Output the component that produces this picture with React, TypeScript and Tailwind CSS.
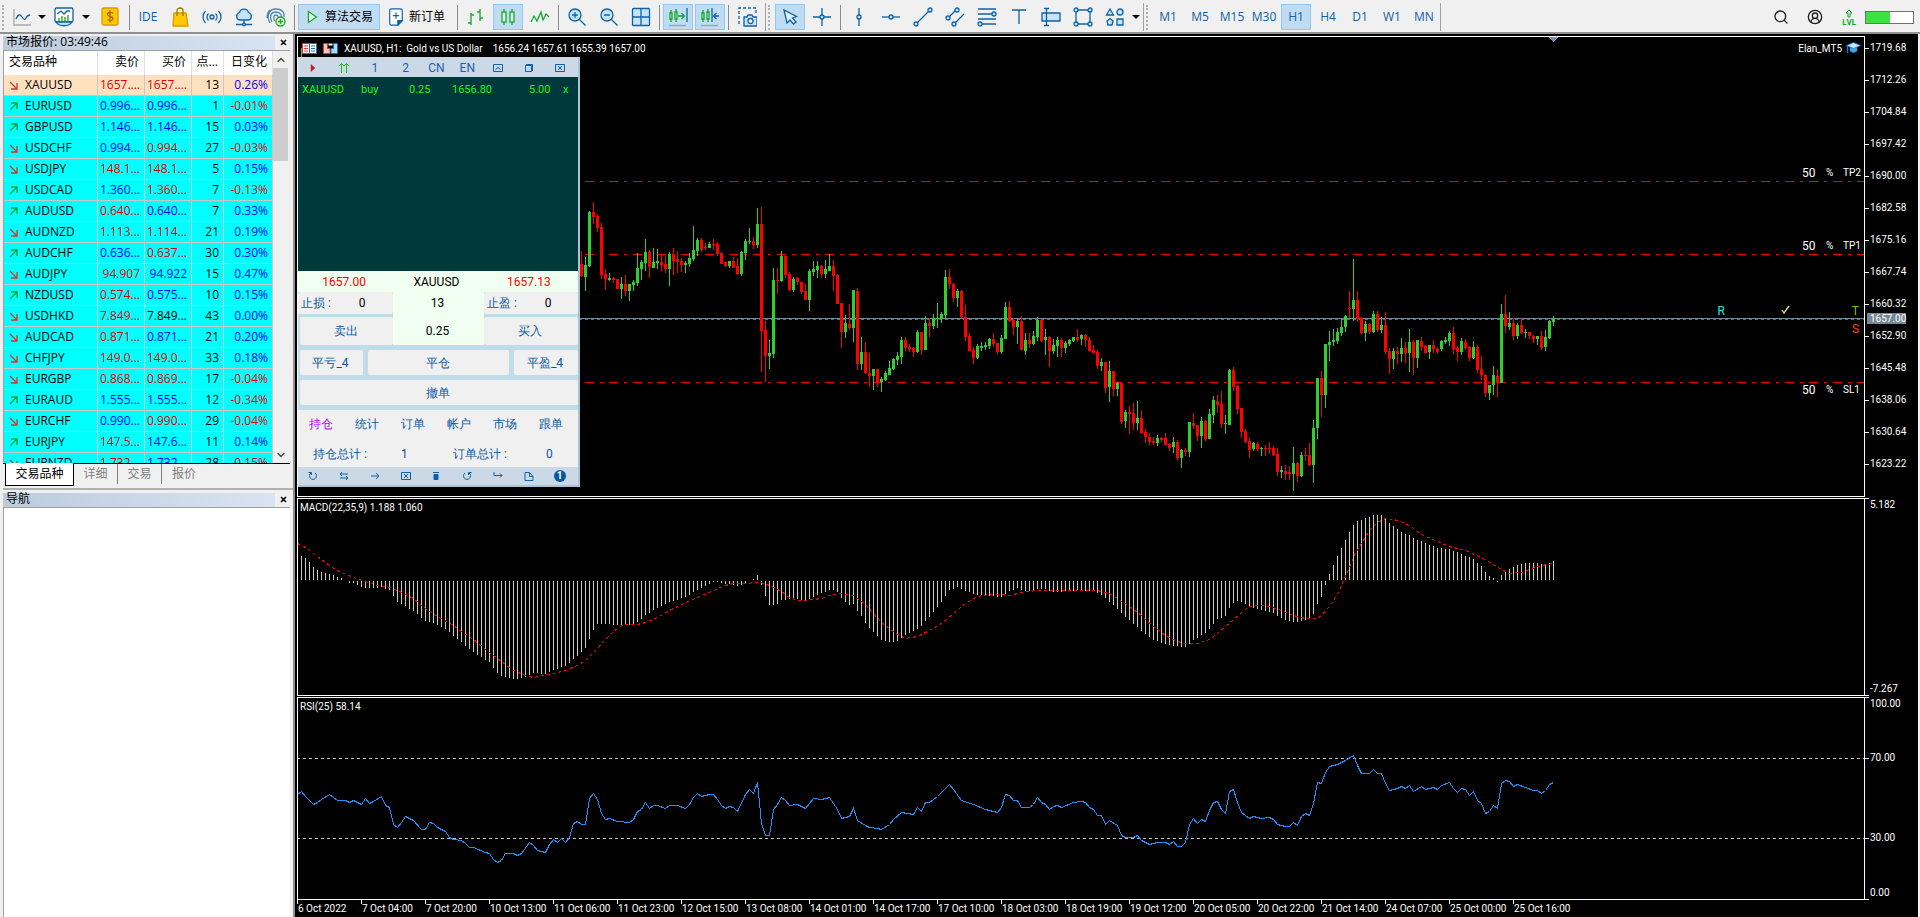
import * as React from "react"
import { ChevronDown, ChevronUp, CircleUserRound, Search } from "lucide-react"
import clsx from "clsx"

const UI_FONT = "font-['Open_Sans','Noto_Sans_CJK_SC',sans-serif]"
const CHART_FONT = "font-[Roboto,sans-serif]"

/* ------------------------------------------------------------------ */
/* Market data                                                         */
/* ------------------------------------------------------------------ */

type Tone = "up" | "down" | "flat"

interface Quote {
  symbol: string
  trend: "up" | "down"
  bid: string
  bidTone: Tone
  ask: string
  askTone: Tone
  spread: number
  change: string
}

function quote(
  symbol: string,
  trend: "up" | "down",
  bid: string,
  bidTone: Tone,
  ask: string,
  askTone: Tone,
  spread: number,
  change: string
): Quote {
  return { symbol, trend, bid, bidTone, ask, askTone, spread, change }
}

const QUOTES: Quote[] = [
  quote("XAUUSD", "down", "1657....", "down", "1657....", "down", 13, "0.26%"),
  quote("EURUSD", "up", "0.996...", "up", "0.996...", "up", 1, "-0.01%"),
  quote("GBPUSD", "up", "1.146...", "up", "1.146...", "up", 15, "0.03%"),
  quote("USDCHF", "down", "0.994...", "up", "0.994...", "down", 27, "-0.03%"),
  quote("USDJPY", "down", "148.1...", "down", "148.1...", "down", 5, "0.15%"),
  quote("USDCAD", "up", "1.360...", "up", "1.360...", "down", 7, "-0.13%"),
  quote("AUDUSD", "up", "0.640...", "down", "0.640...", "up", 7, "0.33%"),
  quote("AUDNZD", "down", "1.113...", "down", "1.114...", "down", 21, "0.19%"),
  quote("AUDCHF", "up", "0.636...", "up", "0.637...", "down", 30, "0.30%"),
  quote("AUDJPY", "down", "94.907", "down", "94.922", "up", 15, "0.47%"),
  quote("NZDUSD", "up", "0.574...", "down", "0.575...", "up", 10, "0.15%"),
  quote("USDHKD", "down", "7.849...", "down", "7.849...", "flat", 43, "0.00%"),
  quote("AUDCAD", "down", "0.871...", "down", "0.871...", "up", 21, "0.20%"),
  quote("CHFJPY", "down", "149.0...", "down", "149.0...", "down", 33, "0.18%"),
  quote("EURGBP", "down", "0.868...", "down", "0.869...", "down", 17, "-0.04%"),
  quote("EURAUD", "up", "1.555...", "up", "1.555...", "up", 12, "-0.34%"),
  quote("EURCHF", "down", "0.990...", "up", "0.990...", "down", 29, "-0.04%"),
  quote("EURJPY", "up", "147.5...", "down", "147.6...", "up", 11, "0.14%"),
  quote("EURNZD", "down", "1.732...", "down", "1.732...", "up", 28, "-0.15%"),
]

const TONE_CLASS: Record<Tone, string> = {
  up: "text-[#0000ff]",
  down: "text-[#e00000]",
  flat: "text-black",
}

/** direction, high, body top, body bottom, low */
const CANDLES = `
r91,104,116,117 g97,105,117,131 g51,52,106,107 r42,52,57,64 r54,56,68,72 r63,67,115,119 r109,114,119,130 g113,118,120,121
r117,118,120,123 r119,119,129,129 g117,124,129,139 r115,124,131,136 g124,124,131,141 g120,122,125,131 g93,108,123,126 g100,102,109,120
g79,92,103,111 r90,92,107,118 g88,102,108,108 g89,101,103,109 r95,102,105,111 r96,104,109,113 g92,94,109,126 r88,94,101,115
r91,99,102,113 r98,101,105,112 g101,103,105,113 g93,98,104,107 g66,90,99,101 g78,80,91,96 r78,80,90,92 r83,87,88,90
g82,84,88,88 r79,84,85,90 r82,84,94,96 r92,93,104,104 r102,102,106,107 g101,101,106,108 r97,101,108,108 r98,106,114,115
g91,92,114,116 g79,81,93,100 g68,81,82,84 r77,81,85,89 g48,64,85,88 r47,64,171,212 r161,170,196,222 g180,193,196,209
g108,120,194,198 r108,120,121,134 g91,96,121,122 r96,96,115,118 r112,114,130,131 g117,119,130,132 r117,118,122,125 r122,122,132,134
r124,131,140,140 g109,111,140,151 g101,109,112,116 g101,106,110,118 r105,106,114,118 g100,109,114,118 g94,106,111,111 r100,106,116,131
r114,115,144,144 r143,143,172,188 g155,163,172,178 r144,164,168,170 g130,130,168,182 r128,131,204,210 g177,192,204,210 r182,192,213,214
r193,213,216,227 g209,209,216,230 r209,209,222,227 g217,219,222,232 g211,213,220,221 g201,208,215,215 g198,199,209,210 g192,196,200,205
g177,180,197,204 r177,180,188,191 r184,187,189,192 r187,188,192,197 g170,172,192,193 r172,172,190,195 g156,163,190,190 r158,163,166,177
g154,158,166,169 g143,158,159,168 g152,154,159,163 g110,117,155,158 r109,117,124,129 r123,124,138,142 g129,131,138,147 r130,131,157,158
r145,157,177,181 r173,176,191,191 r187,190,198,204 g184,186,198,199 g182,186,188,191 g182,185,187,190 g178,179,186,189 r173,179,184,187
r183,183,192,194 g175,178,192,194 g142,147,179,179 r141,147,161,162 r158,160,167,175 g159,161,167,184 r156,161,190,190 g173,180,191,195
r173,180,184,188 g171,176,184,185 g157,160,177,181 r159,160,181,182 g169,177,180,195 r176,177,191,207 g179,185,191,194 g177,180,186,197
r178,180,188,197 g181,183,188,193 g179,180,184,186 g177,177,181,182 r169,177,180,182 g174,175,179,185 r174,175,180,187 r177,180,191,191
r185,190,193,193 r190,192,206,209 g198,202,206,211 r202,202,228,233 g201,211,227,242 r211,211,229,236 g222,223,229,236 r223,223,262,264
g250,252,261,268 r246,252,254,274 r243,253,263,270 g241,258,263,270 r250,258,273,274 r269,272,277,283 r273,277,282,285 r277,281,283,285
g275,278,283,286 r277,278,280,282 r273,278,285,285 r283,284,288,291 g277,282,287,293 r280,282,298,301 g289,290,298,308 r288,290,292,296
g262,262,292,297 r253,263,266,269 r265,265,276,281 g257,261,276,288 r260,261,279,281 g249,254,279,279 g236,240,255,263 r235,241,245,253
r231,244,264,268 g255,263,264,274 g209,210,265,265 r207,210,227,231 r225,226,249,254 r248,248,272,278 r269,271,282,283 r278,281,290,298
g282,283,289,291 r282,284,289,291 g287,288,289,296 r285,288,289,296 r282,288,289,294 r286,288,295,296 r288,294,312,316 g306,310,312,318
r305,311,314,320 r306,312,314,320 g287,303,314,331 r302,303,316,322 g292,295,316,317 r288,295,296,301 r283,295,305,306 g260,268,305,323
g218,218,268,279 r211,218,235,257 g184,184,235,248 g171,182,185,201 g169,180,182,186 g168,172,181,184 g159,167,173,176 g155,156,167,172
r131,148,149,158 g99,140,149,161 r131,140,159,162 r157,158,173,174 g161,164,173,181 r163,164,172,174 g151,154,172,173 r151,154,170,172
g157,165,170,173 r152,165,192,194 r188,191,199,214 g188,191,199,209 r187,191,194,204 g178,188,194,202 r182,188,193,203 g169,182,193,212
r180,182,198,215 g180,180,198,208 r177,181,187,191 r185,186,193,193 g185,185,192,199 r180,185,189,193 r187,189,192,194 g180,181,189,191
g177,180,182,184 g171,173,181,186 r167,173,189,194 r186,188,192,201 g178,181,192,195 r179,182,188,190 r186,187,198,201 g181,187,198,199
r185,187,210,213 r196,209,215,220 r214,215,233,237 g225,225,233,240 g206,215,225,235 r209,216,223,237 g144,154,223,223 r135,154,166,173
g152,163,167,170 r158,163,176,180 g163,165,176,179 r158,165,173,174 g169,172,173,178 r172,172,176,179 r175,176,179,183 g176,176,179,185
r171,176,188,190 g170,177,187,191 g160,161,178,179 g156,158,162,166`
  .trim()
  .split(/\s+/)
  .map((c) => ({ up: c[0] === "g", v: c.slice(1).split(",").map(Number) }))

type Point = [number, number]

/** "bar:value" pairs */
function parseSeries(src: string): Point[] {
  return src
    .trim()
    .split(/\s+/)
    .map((p) => p.split(":").map(Number) as Point)
}

const MACD_KEYS = parseSeries(`
0:66 1:68 2:72 3:77 4:80 5:82 7:84 8:85 9:87 10:88 11:90 12:93 13:93 14:95 15:97 17:98 19:98 20:97 22:100 23:106 24:112 26:116 28:121
31:131 33:133 36:139 39:149 42:159 44:165 47:172 48:178 49:183 50:186 52:188 54:189 56:187 58:183 61:184 63:180 66:176 68:169 70:162
71:158 72:149 73:140 74:134 81:135 83:134 84:132 86:125 89:118 92:112 96:107 99:100 102:94 103:92 104:92 108:95 109:96 110:95 111:93
112:91 113:89 114:85 115:95 116:106 117:115 119:114 120:110 122:109 124:109 126:110 127:109 129:105 132:100 133:100 134:102 135:108
137:115 138:114 139:121 140:126 141:133 142:138 143:142 145:150 147:152 149:151 151:145 153:141 155:136 156:131 157:127 160:112 162:100
164:97 168:104 172:106 175:107 177:101 179:98 181:101 183:101 184:99 186:99 188:102 193:101 194:100 198:101 200:105 203:115 205:123
207:130 210:141 213:150 217:155 220:157 221:157 223:150 225:145 226:143 227:139 229:129 231:126 232:118 233:113 234:111 235:112 236:114
237:116 239:119 243:123 245:128 247:131 249:132 250:131 252:129 253:124 254:114 255:107 256:95 257:84 258:75 259:66 260:58 261:50 262:42
263:35 264:31 266:28 268:25 270:25 271:29 272:33 274:39 276:44 277:45 278:48 281:53 284:58 287:59 290:64 293:69 294:73 295:76 296:82
297:86 298:88 299:92 300:85 301:82 302:79 304:75 306:73 309:73 310:74 311:75 312:73 313:71`)

const SIGNAL_KEYS = parseSeries(`
-1:53 1:57 2:60 4:66 6:72 8:78 10:82 13:87 16:91 19:95 22:97 24:100 26:104 28:108 31:118 34:126 38:135 40:141 43:149 47:162 50:171 53:180
56:185 58:187 62:184 66:180 69:175 71:170 72:166 73:162 74:158 76:149 78:141 80:135 82:134 84:134 86:132 89:127 92:120 95:114 99:107
103:100 106:95 108:93 111:93 114:92 116:93 118:97 120:101 122:107 124:110 126:110 130:108 132:105 135:103 138:105 139:108 141:114 143:123
145:132 147:138 149:144 151:148 154:146 157:140 160:133 163:123 166:113 169:106 172:104 175:104 177:105 180:102 184:100 193:100 199:100
202:103 204:108 207:116 210:125 213:136 216:145 219:151 221:153 224:153 227:149 229:143 231:136 233:129 235:122 237:116 239:115 242:116
245:120 248:125 251:128 254:128 255:125 257:116 259:104 260:95 261:86 262:77 263:66 265:53 267:40 269:32 271:28 273:29 275:31 278:38
280:44 284:51 287:56 291:60 295:67 298:74 300:79 302:83 305:82 307:79 310:75 313:73`)

const RSI_KEYS = parseSeries(`
-1:304 0:301 1:306 2:310 3:314 4:312 5:309 7:304 9:310 11:310 12:312 13:310 15:314 16:308 17:313 18:311 20:306 21:315 22:317 23:334 24:337
25:332 26:326 28:330 30:339 31:339 32:332 33:333 34:337 36:341 37:347 38:349 40:350 41:353 42:357 43:357 46:362 47:363 48:369 49:372
50:370 51:363 53:363 54:365 55:363 57:352 58:355 59:360 61:362 62:354 63:349 64:352 65:348 66:352 67:347 68:333 69:331 70:334 71:334
72:308 73:303 74:309 75:323 76:329 77:328 79:331 82:332 83:329 84:321 85:319 86:312 87:318 88:315 89:315 91:318 92:315 94:315 96:318
97:314 98:307 99:303 100:306 102:304 103:304 104:309 105:315 106:318 107:316 108:317 109:321 111:304 112:299 113:303 114:292 115:333
116:345 117:345 118:319 119:314 120:307 121:310 122:315 124:314 126:318 128:308 130:309 132:307 133:313 134:319 135:328 137:326 138:318
139:330 141:335 142:337 144:338 145:339 147:334 148:329 150:322 153:324 154:317 155:321 156:312 157:312 159:306 162:294 163:299 165:310
168:314 171:319 174:322 175:317 176:304 177:305 178:310 179:310 180:317 182:317 183:314 184:307 185:312 186:314 187:319 188:316 189:315
190:317 193:312 195:311 196:312 197:317 198:319 199:325 200:325 201:334 202:330 204:335 205:345 206:347 208:347 209:345 210:350 212:354
214:352 216:352 217:354 218:351 219:356 220:356 221:352 222:334 223:328 224:333 225:329 226:331 227:320 228:312 229:311 230:319 231:323
232:301 233:299 234:312 235:322 237:328 238:326 240:328 242:327 243:329 244:334 246:336 247:336 248:332 249:335 250:326 251:323 252:325
253:313 254:292 255:293 256:282 257:276 259:274 261:270 263:265 264:275 265:283 267:283 268:279 269:283 270:283 271:293 272:300 274:298
275:296 276:298 277:295 278:301 280:296 281:299 283:297 284:299 285:295 287:292 288:298 289:302 290:298 291:299 292:305 293:301 294:310
295:313 296:323 297:321 298:315 299:318 300:293 301:290 302:291 303:296 304:294 306:297 308:300 309:300 310:303 311:300 312:294 313:292`)

const BAR_STEP = 4
const BAR_ORIGIN = 3
const FIRST_CANDLE = 70

const barX = (index: number) => BAR_ORIGIN + index * BAR_STEP

/** Linear interpolation between key points, one value for each bar */
function fillSeries(keys: Point[], count: number) {
  const out: number[] = []
  let k = 0
  for (let i = 0; i < count; i++) {
    while (k < keys.length - 2 && keys[k + 1][0] <= i) k++
    const [x0, y0] = keys[k]
    const [x1, y1] = keys[k + 1]
    out.push(Math.round(y0 + ((y1 - y0) * (i - x0)) / (x1 - x0)))
  }
  return out
}

const MACD_BARS = fillSeries(MACD_KEYS, 314)

const toPolyline = (keys: Point[], offset: number) =>
  keys.map(([i, v]) => `${barX(i) + 0.5},${v - offset + 0.5}`).join(" ")

const PRICE_LABELS = [
  "1719.68", "1712.26", "1704.84", "1697.42", "1690.00", "1682.58", "1675.16",
  "1667.74", "1660.32", "1652.90", "1645.48", "1638.06", "1630.64", "1623.22",
]

const DATE_LABELS = [
  "6 Oct 2022", "7 Oct 04:00", "7 Oct 20:00", "10 Oct 13:00", "11 Oct 06:00", "11 Oct 23:00", "12 Oct 15:00",
  "13 Oct 08:00", "14 Oct 01:00", "14 Oct 17:00", "17 Oct 10:00", "18 Oct 03:00", "18 Oct 19:00", "19 Oct 12:00",
  "20 Oct 05:00", "20 Oct 22:00", "21 Oct 14:00", "24 Oct 07:00", "25 Oct 00:00", "25 Oct 16:00",
]

/* ------------------------------------------------------------------ */
/* Toolbar                                                             */
/* ------------------------------------------------------------------ */

const BLUE = "#0f62a8"
const PALE = "#c5e4fa"
const GREEN = "#12a82c"

function Icon({ children, size = 20, stroke = BLUE }: { children: React.ReactNode; size?: number; stroke?: string }) {
  return (
    <svg width={size} height={size} viewBox="0 0 20 20" fill="none" stroke={stroke} strokeWidth="1.3" aria-hidden>
      {children}
    </svg>
  )
}

function Caret({ label, className }: { label: string; className: string }) {
  return (
    <button type="button" aria-label={label} className={clsx("flex h-[26px] items-center justify-center", className)}>
      <span className="border-x-[4px] border-t-4 border-x-transparent border-t-black" />
    </button>
  )
}

function ToolButton({ label, active, children }: { label: string; active?: boolean; children: React.ReactNode }) {
  return (
    <button
      type="button"
      aria-label={label}
      className={clsx(
        "mx-px flex h-[26px] w-[30px] shrink-0 items-center justify-center text-xs text-[#0f62a8]",
        active && "border border-[#90c8f6] bg-[#c0dcf3]"
      )}
    >
      {children}
    </button>
  )
}

const Separator = () => (
  <span className="flex w-[5px] shrink-0 justify-center">
    <span className="h-[25px] w-px bg-[#8a8a8a]" />
  </span>
)

const Grip = () => <span className="h-[25px] w-0 border-l-2 border-dotted border-[#b0b0b0]" />

const GroupEnd = () => (
  <span className="flex h-7 w-[11px] shrink-0 items-center gap-0.5 pl-0.5">
    <span className="h-full w-px bg-[#a0a0a0]" />
    <Grip />
  </span>
)

const TIMEFRAMES = ["M1", "M5", "M15", "M30", "H1", "H4", "D1", "W1", "MN"]

function Toolbar() {
  return (
    <header className="flex h-[34px] items-center border-b-2 border-[#909090] bg-[#f0f0f0] pt-0.5">
      <span className="flex w-2 shrink-0 pl-0.5">
        <Grip />
      </span>
      <button type="button" aria-label="Line chart" className="flex w-7 shrink-0 justify-center">
        <Icon>
          <path d="M2 2v16h17" stroke="#a8a8a8" />
          <path d="M4 12c2-5 4-5 6-2s3 3 4 1 2-3 4-3" />
        </Icon>
      </button>
      <Caret label="Chart list" className="w-3" />
      <button type="button" aria-label="Indicators" className="flex w-8 shrink-0 justify-center">
        <Icon>
          <rect x="1" y="1" width="18" height="14" rx="1.5" fill="#fff" />
          <path d="M3 7l4-3 3 3 3-3h3" />
          <path d="M5 14v-3M8 14v-5M11 14v-4M14 14v-6" stroke={GREEN} />
          <path d="M2 15c3 5 13 5 16 0z" fill={PALE} />
        </Icon>
      </button>
      <Caret label="Indicator list" className="w-3" />
      <button type="button" aria-label="Trade" className="flex w-[35px] shrink-0 justify-center">
        <Icon stroke="#a86a00">
          <rect x="2" y="1" width="16" height="17" rx="1.5" fill="#ffc800" stroke="#d89c00" />
          <path d="M13 6.5c-1-1.5-5.500-1.500-5.500 1s5.500 1.500 5.500 4-4.500 2.500-5.500 1M10 3.500v12" />
        </Icon>
      </button>
      <Separator />
      <ToolButton label="IDE">IDE</ToolButton>
      <ToolButton label="Market">
        <Icon stroke="#d89c00">
          <path d="M4 6h12l2 13H3z" fill="#ffc800" />
          <path d="M7 9V4c0-4 6-4 6 0v5" stroke="#a87400" />
        </Icon>
      </ToolButton>
      <ToolButton label="Signals">
        <Icon>
          <circle cx="10" cy="10" r="2" fill={PALE} />
          <path d="M6.500 6.500c-2 2-2 5 0 7M13.500 6.500c2 2 2 5 0 7M3.500 4c-3.300 3.500-3.300 8.500 0 12M16.500 4c3.300 3.500 3.300 8.500 0 12" />
        </Icon>
      </ToolButton>
      <ToolButton label="VPS">
        <Icon>
          <path d="M5 13a4 4 0 0 1 .5-7.500c1-4.500 8-4.500 9 0A4 4 0 0 1 15 13z" fill={PALE} />
          <path d="M10 13v4M2 17.500h16" />
          <circle cx="10" cy="17.500" r="1.300" fill={PALE} />
        </Icon>
      </ToolButton>
      <ToolButton label="Accounts">
        <Icon>
          <path d="M4 16C0 9 3 2 10 2s9 5 8 8M6 15C3 9 5 5 10 5s6 4 5.500 6M8.500 14C7 10 8 8 10 8s3 2 2 5M1 11c0-3 1-6 3-8" stroke="#4a86b8" />
          <circle cx="14.500" cy="14.500" r="4.500" fill="#d8f5d8" stroke={GREEN} />
          <path d="M14.500 12v5M12 14.500h5" stroke={GREEN} />
        </Icon>
      </ToolButton>
      <Separator />
      <button
        type="button"
        className="mx-px flex h-[26px] w-[82px] shrink-0 items-center justify-center gap-1 border border-[#90c8f6] bg-[#c0dcf3] pr-0.5 text-xs text-black"
      >
        <Icon size={18} stroke={GREEN}>
          <path d="M6 4l9 6-9 6z" fill="#e2f6e2" />
        </Icon>
        算法交易
      </button>
      <button type="button" className="flex h-[26px] w-[74px] shrink-0 items-center justify-center gap-1 pr-1 text-xs text-black">
        <Icon size={18}>
          <path d="M3 3q0-2 2-2h10q2 0 2 2v11l-5 5H5q-2 0-2-2z" fill="#fff" />
          <path d="M12 19l5-5h-5z" fill={BLUE} />
          <path d="M10 5v7M6.500 8.500h7" />
        </Icon>
        新订单
      </button>
      <Separator />
      <ToolButton label="Bar chart">
        <Icon stroke={GREEN}>
          <path d="M5 6v12M2 16h3M5 8h3M14 2v12M11 5h3M14 11h3" />
        </Icon>
      </ToolButton>
      <ToolButton label="Candlesticks" active>
        <Icon stroke={GREEN}>
          <path d="M6 2v16M14 2v16" />
          <rect x="4" y="5" width="4" height="10" fill="#e2f6e2" />
          <rect x="12" y="5" width="4" height="10" fill="#e2f6e2" />
        </Icon>
      </ToolButton>
      <ToolButton label="Line">
        <Icon stroke={GREEN}>
          <path d="M1 15l3-6 3 5 4-9 2 8 3-6 3 3" />
        </Icon>
      </ToolButton>
      <Separator />
      <ToolButton label="Zoom in">
        <Icon>
          <circle cx="8" cy="8" r="6" fill={PALE} />
          <path d="M12.500 12.500l6 6M8 5v6M5 8h6" />
        </Icon>
      </ToolButton>
      <ToolButton label="Zoom out">
        <Icon>
          <circle cx="8" cy="8" r="6" fill={PALE} />
          <path d="M12.500 12.500l6 6M5 8h6" />
        </Icon>
      </ToolButton>
      <ToolButton label="Tile windows">
        <Icon>
          <rect x="1.500" y="1.500" width="17" height="17" rx="1" fill={PALE} />
          <path d="M10 1.500v17M1.500 10h17" />
        </Icon>
      </ToolButton>
      <Separator />
      <ToolButton label="Auto scroll" active>
        <Icon>
          <path d="M3 3v12M8 2v13M10 9h6M13.500 6l3 3-3 3" stroke={GREEN} />
          <path d="M2 6h2v6H2zM7 5h2v7H7z" fill="#e2f6e2" stroke={GREEN} />
          <path d="M19 1v14" />
          <path d="M1 18.500h17" stroke="#a0a0a0" />
        </Icon>
      </ToolButton>
      <ToolButton label="Chart shift" active>
        <Icon>
          <path d="M3 3v12M8 2v13" stroke={GREEN} />
          <path d="M2 6h2v6H2zM7 5h2v7H7z" fill="#e2f6e2" stroke={GREEN} />
          <path d="M12 1v14M14 9h5M16.500 6l-3 3 3 3" />
          <path d="M1 18.500h17" stroke="#a0a0a0" />
        </Icon>
      </ToolButton>
      <Separator />
      <ToolButton label="Screenshot">
        <Icon>
          <path d="M2 17V1h17v6" strokeDasharray="3 2" />
          <path d="M7 10h3l1-2h4l1 2h4v9H7z" fill={PALE} />
          <circle cx="13.500" cy="14" r="2.500" fill="#fff" />
        </Icon>
      </ToolButton>
      <GroupEnd />
      <ToolButton label="Cursor" active>
        <Icon>
          <path d="M4 3l3 13 3-3 3.500 4 2.500-2-3.500-4 4-1.500z" fill="#e4f2fc" />
        </Icon>
      </ToolButton>
      <ToolButton label="Crosshair">
        <Icon>
          <path d="M10 1v18M1 10h18" />
          <circle cx="10" cy="10" r="2" fill={PALE} />
        </Icon>
      </ToolButton>
      <Separator />
      <ToolButton label="Vertical line">
        <Icon>
          <path d="M10 1v18" />
          <circle cx="10" cy="10" r="2" fill={PALE} />
        </Icon>
      </ToolButton>
      <ToolButton label="Horizontal line">
        <Icon>
          <path d="M1 10h18" />
          <circle cx="10" cy="10" r="2" fill={PALE} />
        </Icon>
      </ToolButton>
      <ToolButton label="Trend line">
        <Icon>
          <path d="M3 17L17 3" />
          <circle cx="3" cy="17" r="2" fill={PALE} />
          <circle cx="17" cy="3" r="2" fill={PALE} />
        </Icon>
      </ToolButton>
      <ToolButton label="Channel">
        <Icon>
          <path d="M3 11l8-8M9 17l10-10" />
          <circle cx="3" cy="11" r="2" fill={PALE} />
          <circle cx="12" cy="3" r="2" fill={PALE} />
          <circle cx="9" cy="17" r="2" fill={PALE} />
        </Icon>
      </ToolButton>
      <ToolButton label="Fibonacci">
        <Icon>
          <path d="M1 2h18M1 7h15M1 12h18M4 17h15" />
          <circle cx="17" cy="7" r="2" fill={PALE} />
          <circle cx="3" cy="17" r="2" fill={PALE} />
        </Icon>
      </ToolButton>
      <ToolButton label="Text">
        <Icon>
          <path d="M3 3h14M10 3v14" />
        </Icon>
      </ToolButton>
      <ToolButton label="Text label">
        <Icon>
          <path d="M1 6h18v8H1z" fill={PALE} />
          <path d="M3 1.500h5M3 18.500h5M5.500 1.500v17" />
        </Icon>
      </ToolButton>
      <ToolButton label="Rectangle">
        <Icon>
          <path d="M3 3h14v14H3z" />
          <circle cx="3" cy="3" r="2" fill={PALE} />
          <circle cx="17" cy="3" r="2" fill={PALE} />
          <circle cx="3" cy="17" r="2" fill={PALE} />
          <circle cx="17" cy="17" r="2" fill={PALE} />
        </Icon>
      </ToolButton>
      <ToolButton label="Shapes">
        <Icon>
          <path d="M5 2l3.500 6h-7zM5 11.500l3 2.500-1 4H3l-1-4z" fill={PALE} />
          <circle cx="15" cy="5" r="3" fill={PALE} />
          <path d="M12 12h6v6h-6z" fill={PALE} />
        </Icon>
      </ToolButton>
      <Caret label="Shape list" className="w-[10px]" />
      <GroupEnd />
      {TIMEFRAMES.map((tf) => (
        <ToolButton key={tf} label={tf} active={tf === "H1"}>
          {tf}
        </ToolButton>
      ))}
      <span className="h-7 w-px shrink-0 bg-[#a0a0a0]" />
      <div className="ml-auto flex items-center pr-1.5">
        <button type="button" aria-label="Search" className="flex w-8 justify-center text-[#202020]">
          <Search size={16} strokeWidth={2} />
        </button>
        <button type="button" aria-label="Account" className="flex w-9 justify-center text-[#202020]">
          <CircleUserRound size={16} strokeWidth={2} />
        </button>
        <span className="flex w-8 flex-col items-center text-[8px] leading-[8px] font-bold text-[#12a82c]">
          <svg width="8" height="9" viewBox="0 0 8 9" fill="none" stroke={GREEN} aria-hidden>
            <path d="M4 1L1 4h2v4h2V4h2z" />
          </svg>
          LVL
        </span>
        <span className="flex h-[13px] w-[49px] border border-[#707070] bg-white">
          <span className="w-1/2 bg-[#3fe03f]" />
        </span>
      </div>
    </header>
  )
}

/* ------------------------------------------------------------------ */
/* Left dock                                                           */
/* ------------------------------------------------------------------ */

function DockTitle({ children }: { children: React.ReactNode }) {
  return (
    <div className="flex h-[15px] items-center text-xs leading-[15px] text-black">
      <h2 className="h-[14px] flex-1 bg-linear-to-r from-[#bccbdb] to-[#d8e4f2] pl-[3px] leading-[12px]">{children}</h2>
      <button type="button" aria-label="Close" className="flex w-[18px] justify-center pr-0.5">
        <svg width="7" height="7" viewBox="0 0 7 7" stroke="#000" strokeWidth="1.6" aria-hidden>
          <path d="M1 1l5 5M6 1L1 6" />
        </svg>
      </button>
    </div>
  )
}

function TrendArrow({ trend }: { trend: "up" | "down" }) {
  return (
    <svg
      width="9"
      height="9"
      viewBox="0 0 9 9"
      fill="none"
      stroke={trend === "up" ? "#10a030" : "#e03020"}
      strokeWidth="1.3"
      aria-hidden
    >
      <path d={trend === "up" ? "M1 8L8 1M2 1h6v6" : "M1 1l7 7M2 8h6V2"} />
    </svg>
  )
}

function MarketWatch() {
  const cell = "border-r border-b border-[#c8c8c8] p-0 text-right font-normal"
  return (
    <section className="pt-px">
      <DockTitle>市场报价: 03:49:46</DockTitle>
      <div className="mr-[3px] flex h-[413px] overflow-hidden border-t border-l border-[#a0a0a0] bg-[#f0f0f0]">
        <table className="w-[269px] shrink-0 table-fixed border-separate border-spacing-0 self-start text-xs leading-4 text-black">
          <colgroup>
            <col className="w-[94px]" />
            <col className="w-[47px]" />
            <col className="w-[47px]" />
            <col className="w-8" />
            <col className="w-[49px]" />
          </colgroup>
          <thead>
            <tr className="h-6 bg-white">
              <th className="border-r border-[#e0e0e0] p-0 pb-0.5 pl-[5px] text-left font-normal">交易品种</th>
              <th className="border-r border-[#e0e0e0] p-0 pr-[5px] pb-0.5 text-right font-normal">卖价</th>
              <th className="border-r border-[#e0e0e0] p-0 pr-[5px] pb-0.5 text-right font-normal">买价</th>
              <th className="border-r border-[#e0e0e0] p-0 pr-[5px] pb-0.5 text-right font-normal">点...</th>
              <th className="border-r border-[#e0e0e0] p-0 pr-[5px] pb-0.5 text-right font-normal">日变化</th>
            </tr>
          </thead>
          <tbody>
            {QUOTES.map((q, i) => (
              <tr key={q.symbol} className={clsx("h-[21px]", i === 0 ? "bg-[#ffe1c0]" : "bg-[#00ffff]")}>
                <th scope="row" className={cell}>
                  <span className="flex items-center gap-[7px] pl-[5px]">
                    <TrendArrow trend={q.trend} />
                    {q.symbol}
                  </span>
                </th>
                <td className={clsx(cell, "pr-1", TONE_CLASS[q.bidTone])}>{q.bid}</td>
                <td className={clsx(cell, "pr-1", TONE_CLASS[q.askTone])}>{q.ask}</td>
                <td className={clsx(cell, "pr-1")}>{q.spread}</td>
                <td className={clsx(cell, "pr-1", q.change.startsWith("-") ? "text-[#e00000]" : "text-[#0000ff]")}>
                  {q.change}
                </td>
              </tr>
            ))}
          </tbody>
        </table>
        <div className="flex flex-1 flex-col items-start text-[#505050]">
          <span className="flex h-[17px] w-4 items-center justify-center">
            <ChevronUp size={12} strokeWidth={3} />
          </span>
          <span className="h-[93px] w-[15px] bg-[#cdcdcd]" />
          <span className="mt-auto flex h-[17px] w-4 items-center justify-center">
            <ChevronDown size={12} strokeWidth={3} />
          </span>
        </div>
      </div>
      <nav className="mr-[3px] flex h-[25px] items-start border-t border-black pl-0.5 text-xs text-[#808080]">
        <button type="button" className="-mt-px h-[23px] w-[69px] border-x border-b border-black bg-white text-black">
          交易品种
        </button>
        <button type="button" className="h-5 w-11 border-r border-[#808080]">详细</button>
        <button type="button" className="h-5 w-11 border-r border-[#808080]">交易</button>
        <button type="button" className="h-5 w-11">报价</button>
      </nav>
    </section>
  )
}

function Navigator() {
  return (
    <section className="flex flex-1 flex-col border-t-2 border-[#b0b0b0] pt-0.5">
      <DockTitle>导航</DockTitle>
      <div className="mr-[3px] flex-1 border-t border-l border-[#a0a0a0] bg-white" />
    </section>
  )
}

/* ------------------------------------------------------------------ */
/* Trade panel                                                         */
/* ------------------------------------------------------------------ */

function PanelIcon({ children }: { children: React.ReactNode }) {
  return (
    <svg width="12" height="12" viewBox="0 0 12 12" fill="none" stroke={BLUE} aria-hidden>
      {children}
    </svg>
  )
}

const HEADER_ITEMS: [string, React.ReactNode][] = [
  ["Run", <PanelIcon><path d="M4 2.500l4 3.500-4 3.500z" fill="#c02020" stroke="#c02020" strokeWidth="0.500" /></PanelIcon>],
  ["Direction", <PanelIcon><path d="M3.500 11V2M8.500 11V2M1 4l2.500-2.500L6 4M6 4l2.500-2.500L11 4" stroke="#20c020" /></PanelIcon>],
  ["Layout 1", "1"],
  ["Layout 2", "2"],
  ["Chinese", "CN"],
  ["English", "EN"],
  ["Collapse", <PanelIcon><path d="M1.500 2.500h9v7h-9zM3.500 7.500l2.500-2 2.500 2" /></PanelIcon>],
  ["Restore", <PanelIcon><path d="M2.500 3.500h6v6h-6zM3 2.500h6.500V9" /></PanelIcon>],
  ["Close", <PanelIcon><path d="M1.500 2.500h9v7h-9zM4 4l4 4M8 4L4 8" /></PanelIcon>],
]

const FOOTER_ITEMS: [string, React.ReactNode][] = [
  ["Refresh", <PanelIcon><path d="M4 3a3.500 3.500 0 1 0 4 0M1.500 2.500H4.500V5" /></PanelIcon>],
  ["Swap", <PanelIcon><path d="M2 4h8M4 2L2 4l2 2M2 8h8M8 6l2 2-2 2" /></PanelIcon>],
  ["Next", <PanelIcon><path d="M2 6h8M7 3l3 3-3 3" /></PanelIcon>],
  ["Clear", <PanelIcon><path d="M1.500 2.500h9v7h-9zM4 4l4 4M8 4L4 8" /></PanelIcon>],
  ["Delete", <PanelIcon><path d="M4 4.500h4v5H4z" fill={BLUE} /><path d="M3 2.500h6" /></PanelIcon>],
  ["Undo", <PanelIcon><path d="M4 3a3.500 3.500 0 1 0 4 0M10.500 2.500H7.500V5" /></PanelIcon>],
  ["Forward", <PanelIcon><path d="M2 2v3.500h8M8 3.500l2 2-2 2" /></PanelIcon>],
  ["Document", <PanelIcon><path d="M2 2.500h4.500l3.500 4v4H2zM6.500 2.500v4H10" /></PanelIcon>],
]

const TABS = ["持仓", "统计", "订单", "帐户", "市场", "跟单"]

function StopField({ id, label }: { id: string; label: string }) {
  return (
    <div className="flex h-[22px] items-center rounded-xs bg-[#f0f0f0] pl-[3px]">
      <label htmlFor={id} className="w-[43px] text-[#0858a0]">{label} :</label>
      <input id={id} defaultValue="0" className="w-9 bg-transparent text-center text-black outline-none" />
    </div>
  )
}

function TradePanel() {
  const action = "rounded-xs bg-[#f0f0f0] pr-0.5 text-[#0858a0]"
  return (
    <section className="absolute top-5 left-0 w-[282px] border-r-2 border-b-2 border-[#a9c4d4] bg-[#c0dce8] text-xs leading-4">
      <div className="grid h-5 grid-cols-9 bg-[#cbd8e6] pt-px pr-[3px] text-[#1f5fae]">
        {HEADER_ITEMS.map(([label, content]) => (
          <button key={label} type="button" aria-label={label} className="flex items-center justify-center">
            {content}
          </button>
        ))}
      </div>
      <div className="h-[194px] bg-[#00393b] pt-[5px] pl-1">
        <table className="table-fixed border-separate border-spacing-0 text-[11px] text-[#22f022]">
          <tbody>
            <tr>
              <td className="w-[59px] p-0">XAUUSD</td>
              <td className="w-12 p-0">buy</td>
              <td className="w-[43px] p-0">0.25</td>
              <td className="w-[77px] p-0">1656.80</td>
              <td className="w-[34px] p-0">5.00</td>
              <td className="w-3 p-0">x</td>
            </tr>
          </tbody>
        </table>
      </div>
      <div className="grid h-[21px] grid-cols-3 items-center bg-[#f0fff0] pt-px pr-[3px] text-center">
        <span className="text-[#ff0000]">1657.00</span>
        <span className="text-black">XAUUSD</span>
        <span className="text-[#ff0000]">1657.13</span>
      </div>
      <div className="grid grid-cols-[95px_1fr_94px]">
        <div className="flex flex-col gap-[3px]">
          <StopField id="stop-loss" label="止损" />
          <button type="button" className={clsx("ml-0.5 h-7", action)}>卖出</button>
        </div>
        <div className="flex flex-col items-center bg-[#f0fff0] pr-0.5 text-black">
          <span className="flex h-[22px] items-center">13</span>
          <input aria-label="Lots" defaultValue="0.25" className="mt-[3px] h-7 w-16 bg-transparent text-center outline-none" />
        </div>
        <div className="flex flex-col gap-[3px]">
          <StopField id="take-profit" label="止盈" />
          <button type="button" className={clsx("h-7", action)}>买入</button>
        </div>
      </div>
      <div className="mt-[5px] grid h-[25px] grid-cols-[63px_1fr_64px] gap-[5px] pl-0.5">
        <button type="button" className={action}>平亏_4</button>
        <button type="button" className={action}>平仓</button>
        <button type="button" className={action}>平盈_4</button>
      </div>
      <div className="my-[5px] flex h-[25px] pl-0.5">
        <button type="button" className={clsx("flex-1", action)}>撤单</button>
      </div>
      <div className="bg-[#f0f0f0] text-[#0858a0]">
        <div className="grid h-[27px] grid-cols-6 pr-1">
          {TABS.map((tab, i) => (
            <button key={tab} type="button" className={i === 0 ? "text-[#b400ff]" : undefined}>
              {tab}
            </button>
          ))}
        </div>
        <dl className="flex h-[30px] items-center pt-1 pl-[15px]">
          <dt className="w-[88px]">持仓总计 :</dt>
          <dd className="w-[52px]">1</dd>
          <dt className="w-[93px]">订单总计 :</dt>
          <dd>0</dd>
        </dl>
      </div>
      <div className="grid h-[18px] grid-cols-9 bg-[#cbd8e6] pr-[3px]">
        {FOOTER_ITEMS.map(([label, content]) => (
          <button key={label} type="button" aria-label={label} className="flex items-center justify-center">
            {content}
          </button>
        ))}
        <span className="flex items-center justify-center">
          <span className="size-3 rounded-full bg-[#0858a0] text-center text-[10px] leading-3 font-bold text-white">1</span>
        </span>
      </div>
    </section>
  )
}

/* ------------------------------------------------------------------ */
/* Charts                                                              */
/* ------------------------------------------------------------------ */

const CANDLE_OFFSET = 123

function LevelLine({ y }: { y: number }) {
  return <line x1="287" x2="100%" y1={y + 0.5} y2={y + 0.5} stroke="#ff0000" strokeDasharray="9 6 3 6" />
}

function LevelLabel({ name, className }: { name: string; className: string }) {
  return (
    <div className={clsx("absolute right-[5px] flex items-center leading-4 text-white", className)}>
      <span className="w-6 text-xs">50</span>
      <span className="w-[17px] text-[10px]">%</span>
      <span className="w-4 text-[10px]">{name}</span>
    </div>
  )
}

function PricePane() {
  return (
    <div className="flex min-h-[461px] flex-1">
      <div className="relative flex-1 border border-white">
        <svg className="absolute inset-0 h-full w-full" shapeRendering="crispEdges" aria-label="Price chart">
          <path d="M3 11v10" stroke="#32cd32" />
          <line x1="0" x2="100%" y1="281.5" y2="281.5" stroke="#778899" />
          <line x1="-1" x2="100%" y1="282.5" y2="282.5" stroke="#0aaa1e" strokeDasharray="3 3" />
          <LevelLine y={144} />
          <LevelLine y={217} />
          <LevelLine y={345} />
          {CANDLES.map(({ up, v: [high, top, bottom, low] }, i) => {
            const x = barX(i + FIRST_CANDLE)
            const color = up ? "#32cd32" : "#ff0000"
            return (
              <g key={i} fill={color}>
                <rect x={x} y={high + CANDLE_OFFSET} width="1" height={low - high} />
                <rect x={x - 1} y={top + CANDLE_OFFSET} width="3" height={bottom - top} />
              </g>
            )
          })}
          <path d="M1250 0h11l-5.500 5z" fill="#8291a0" />
        </svg>

        <div className="absolute top-[3px] left-1 flex h-4 items-center text-[10px] text-white">
          <svg width="15" height="11" viewBox="0 0 15 11" aria-hidden>
            <rect x="0.500" y="0.500" width="14" height="10" fill="#fff" stroke="#e03030" />
            <path d="M7.500 0.500h7v10h-7z" fill="#fff" stroke="#2070c0" />
            <path d="M2 3h4M2 5.500h4M2 8h4" stroke="#e03030" />
            <path d="M9 3h4M9 5.500h4M9 8h4" stroke="#2070c0" />
          </svg>
          <svg className="ml-1.5" width="15" height="11" viewBox="0 0 15 11" aria-hidden>
            <path d="M0.500 0.500h4v5h2.500v5h-6.500z" fill="#ffc8c0" stroke="#e03030" />
            <path d="M14.500 0.500h-4v5h-2.500v5h6.500z" fill="#a8dcff" stroke="#2070c0" />
            <path d="M5.500 0.500h4v2h-4z" fill="#fff" />
          </svg>
          <h1 className="ml-1.5 whitespace-pre">XAUUSD, H1:  Gold vs US Dollar</h1>
          <span className="ml-2.5">1656.24 1657.61 1655.39 1657.00</span>
        </div>
        <div className="absolute top-[3px] right-[3px] flex h-4 items-center gap-1 text-[10px] text-white">
          Elan_MT5
          <svg width="15" height="12" viewBox="0 0 15 12" stroke="#1878c0" strokeWidth="0.800" aria-hidden>
            <path d="M4 5v4q3.500 3 7 0V5z" fill="#4aa8e8" />
            <path d="M7.500 0.500l7 3-7 3-7-3z" fill="#c0e8ff" />
            <path d="M1.500 4v7" fill="none" strokeWidth="1.500" />
          </svg>
        </div>

        <LevelLabel name="TP2" className="top-32" />
        <LevelLabel name="TP1" className="top-[201px]" />
        <LevelLabel name="SL1" className="top-[345px]" />
        <span className="absolute top-[266px] right-[139px] text-xs leading-4 text-[#30e0e0]">R</span>
        <svg className="absolute top-[268px] right-[74px]" width="9" height="9" fill="none" stroke="#f0e0a0" aria-label="Confirmed">
          <path d="M1 5l2 3 5-7" strokeWidth="1.300" />
        </svg>
        <span className="absolute top-[266px] right-[5px] text-xs leading-4 text-[#80c800]">T</span>
        <span className="absolute top-[284px] right-[5px] text-xs leading-4 text-[#ff4010]">S</span>

        <TradePanel />
      </div>
      <div className="relative flex w-[53px] shrink-0 flex-col pt-1">
        {PRICE_LABELS.map((p) => (
          <AxisLabel key={p} value={p} className="h-8" />
        ))}
        <span className="absolute top-[277px] left-0.5 h-[11px] w-[39px] bg-[#778899] pl-[3px] text-[10px] leading-[11px] text-white">
          1657.00
        </span>
      </div>
    </div>
  )
}

function AxisLabel({ value, className }: { value: string; className?: string }) {
  return (
    <div className={clsx("flex shrink-0 items-start gap-px text-[10px] leading-4 text-white", className)}>
      <span className="mt-2 h-px w-1 bg-white" />
      {value}
    </div>
  )
}

function IndicatorPane({
  title,
  heightClass,
  axis,
  children,
}: {
  title: string
  heightClass: string
  axis: React.ReactNode
  children: React.ReactNode
}) {
  return (
    <div className={clsx("mt-px flex shrink-0", heightClass)}>
      <div className="relative flex-1 border border-white">
        <svg className="absolute inset-0 h-full w-full" shapeRendering="crispEdges" fill="none" aria-hidden>
          {children}
        </svg>
        <h2 className="absolute top-px left-0.5 text-[10px] leading-4 text-white">{title}</h2>
      </div>
      <div className="flex w-[53px] shrink-0 flex-col">{axis}</div>
    </div>
  )
}

function ChartArea() {
  return (
    <main
      className={clsx(
        "flex min-w-0 flex-1 flex-col overflow-hidden border-l-2 border-[#909090] bg-black pt-0.5 pl-0.5",
        CHART_FONT
      )}
    >
      <PricePane />
      <IndicatorPane
        title="MACD(22,35,9) 1.188 1.060"
        heightClass="h-[198px]"
        axis={
          <>
            <span className="h-px w-1 bg-white" />
            <span className="pl-[5px] text-[10px] leading-3 text-white">5.182</span>
            <span className="mt-auto pl-[5px] text-[10px] leading-3 text-white">-7.267</span>
            <span className="h-px w-1 bg-white" />
          </>
        }
      >
        {MACD_BARS.map((v, i) => {
          // bars hang from the zero line, one pixel apart for each sign
          const top = v <= 90 ? v : 91
          const bottom = v <= 90 ? 90 : v
          return <rect key={i} x={barX(i)} y={top - 9} width="1" height={bottom - top} fill="#c8c8c8" />
        })}
        <polyline points={toPolyline(SIGNAL_KEYS, 9)} stroke="#ff0000" strokeDasharray="3 3" />
      </IndicatorPane>
      <IndicatorPane
        title="RSI(25) 58.14"
        heightClass="h-[203px]"
        axis={
          <>
            <span className="h-px w-1 bg-white" />
            <span className="h-[52px] pl-[5px] text-[10px] leading-3 text-white">100.00</span>
            <AxisLabel value="70.00" className="h-20" />
            <AxisLabel value="30.00" />
            <span className="mt-auto pl-[5px] text-[10px] leading-3 text-white">0.00</span>
            <span className="h-px w-1 bg-white" />
          </>
        }
      >
        <line x1="-1" x2="100%" y1="60.5" y2="60.5" stroke="#c8c8c8" strokeDasharray="3 3" />
        <line x1="-1" x2="100%" y1="140.5" y2="140.5" stroke="#c8c8c8" strokeDasharray="3 3" />
        <polyline points={toPolyline(RSI_KEYS, 208)} stroke="#1e90ff" />
      </IndicatorPane>
      <div className="flex h-[17px] shrink-0 text-[10px] leading-[18px] whitespace-nowrap text-white">
        {DATE_LABELS.map((d) => (
          <span key={d} className="flex w-16 shrink-0">
            <span className="h-1 w-px bg-white" />
            {d}
          </span>
        ))}
      </div>
    </main>
  )
}

export default function App() {
  return (
    <div className={clsx("flex min-h-screen flex-col bg-[#f0f0f0]", UI_FONT)}>
      <Toolbar />
      <div className="flex flex-1 pr-0.5">
        <aside className="flex w-[293px] shrink-0 flex-col pl-[3px]">
          <MarketWatch />
          <Navigator />
        </aside>
        <ChartArea />
      </div>
    </div>
  )
}
